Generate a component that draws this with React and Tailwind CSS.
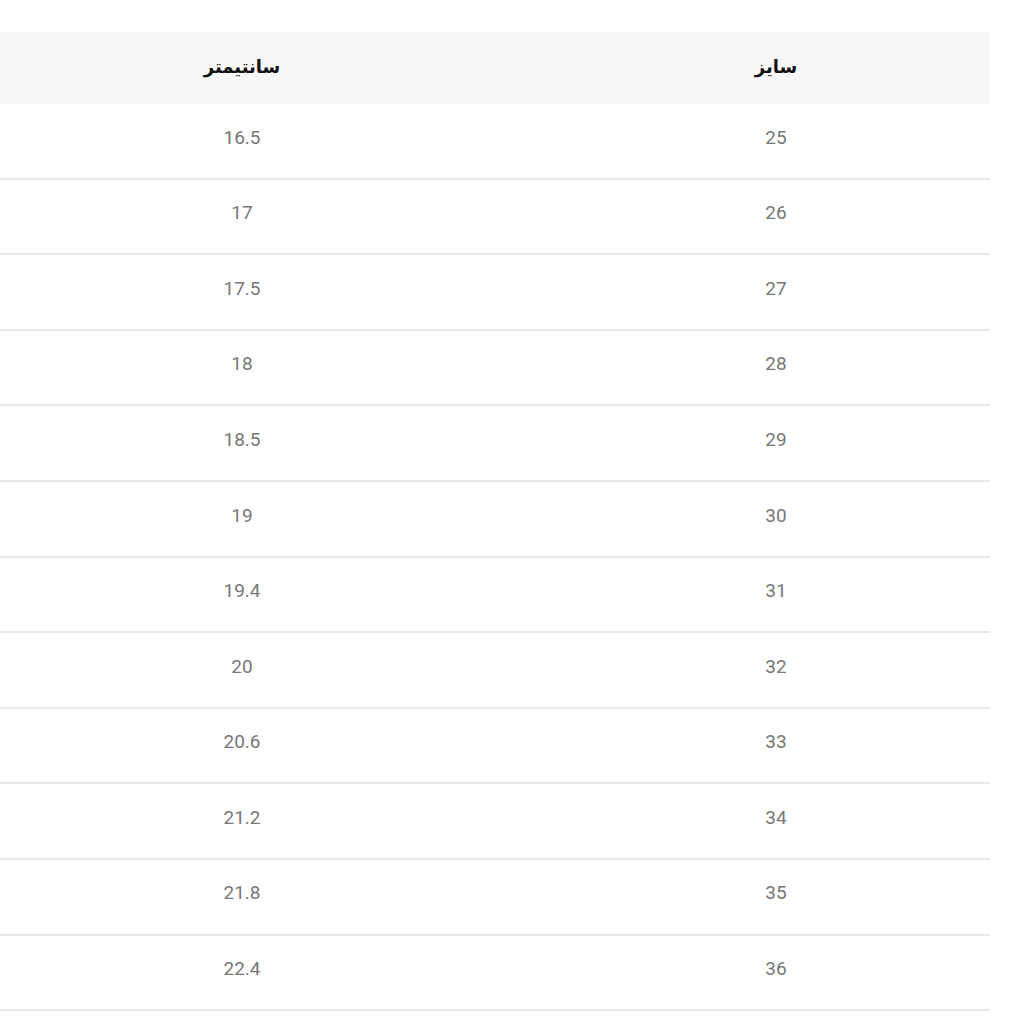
const rows = [
  ["25", "16.5"],
  ["26", "17"],
  ["27", "17.5"],
  ["28", "18"],
  ["29", "18.5"],
  ["30", "19"],
  ["31", "19.4"],
  ["32", "20"],
  ["33", "20.6"],
  ["34", "21.2"],
  ["35", "21.8"],
  ["36", "22.4"],
];

const App = () => {
  return (
    <div className="w-[1024px] h-[1024px] bg-white pt-[32px] overflow-hidden">
      <div className="w-[990px] overflow-hidden">
        <div className="w-[1068px] ml-[-78px]">
          <div className="grid grid-cols-[640px_428px] h-[72px] items-center pb-[4px] bg-[#f7f7f7] font-['DejaVu_Sans',sans-serif] font-bold text-[18px] text-[#111]">
            <div dir="rtl" className="text-center">سانتیمتر</div>
            <div dir="rtl" className="text-center">سایز</div>
          </div>
          {rows.map(([size, cm]) => (
            <div
              key={size}
              className="grid grid-cols-[640px_428px] h-[75.6px] items-center pb-[6px] border-b-2 border-[#e8e8e8] font-['Roboto',sans-serif] text-[19px] text-[#777]"
            >
              <div className="text-center">{cm}</div>
              <div className="text-center">{size}</div>
            </div>
          ))}
        </div>
      </div>
    </div>
  );
};

export default App;
